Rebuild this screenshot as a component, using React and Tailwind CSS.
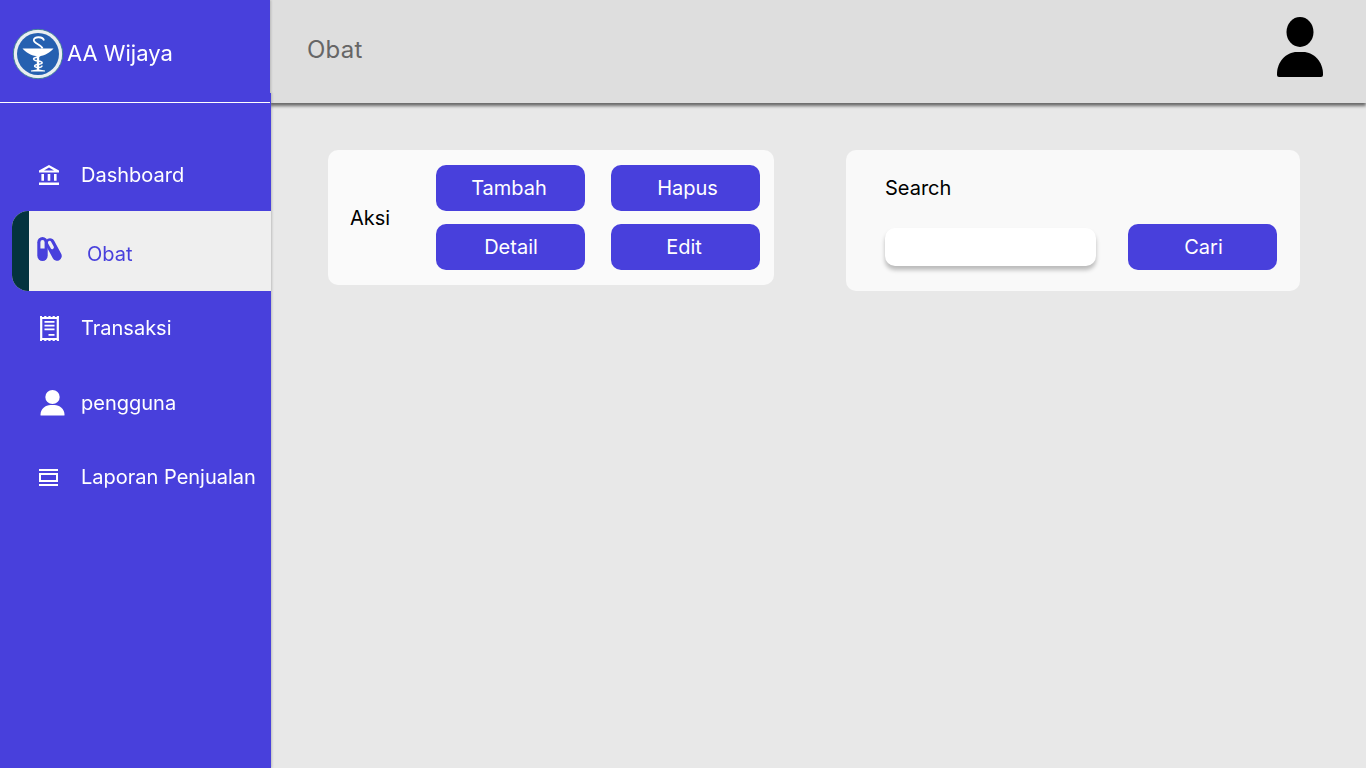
import React from "react";

function Logo() {
  return (
    <svg width="52" height="52" viewBox="0 0 52 52" className="shrink-0">
      <circle cx="26" cy="26" r="24.7" fill="#e9eef1" stroke="#3f7f96" strokeWidth="1" />
      <circle cx="26" cy="26" r="21" fill="#2560b0" />
      <path d="M10.5 20.5 H41.5 C38 24.5 33 27.5 28 28 H24 C19 27.5 14 24.5 10.5 20.5 Z" fill="#fff" />
      <path d="M24.8 28 H27.2 V41.5 L33 42.4 V43.5 H19 V42.4 L24.8 41.5 Z" fill="#fff" />
      <path d="M32 12.5 C31 8.5 22 8 21.8 12 C21.6 15.8 29.5 16.5 30.5 20.5" fill="none" stroke="#fff" strokeWidth="1.8" />
      <path d="M29.5 24 C30 27 28 28.5 22.5 30 C20.5 31 22 32.5 26 33 C31.5 33.6 31.5 36 26 36.4 C21.5 36.8 21.5 39.5 26 39.5 C29 39.5 30 38.5 30 37.5" fill="none" stroke="#fff" strokeWidth="1.5" />
    </svg>
  );
}

function BankIcon() {
  return (
    <svg width="20" height="20" viewBox="0 0 20 20" className="shrink-0">
      <path d="M10 0 20 5.6V7.6H0V5.6Z M10 2.6 5 5.6H15Z" fill="#fff" fillRule="evenodd" />
      <path d="M2.4 9h2.6v6.8H2.4Z M8.7 9h2.6v6.8H8.7Z M15 9h2.6v6.8H15Z M0 17.6H20V20H0Z" fill="#fff" />
    </svg>
  );
}

function PillIcon() {
  return (
    <svg width="26" height="25" viewBox="0 0 26 25" className="shrink-0">
      <line x1="13" y1="6" x2="20" y2="19" stroke="#4840dc" strokeWidth="9.5" strokeLinecap="round" />
      <line x1="12.6" y1="5.6" x2="15.2" y2="10.4" stroke="#efefef" strokeWidth="3.4" strokeLinecap="round" />
      <rect x="0.3" y="0" width="10.4" height="24" rx="5.2" fill="#4840dc" />
      <path d="M3.4 11.5V5.2a2.1 2.1 0 0 1 4.2 0v6.3Z" fill="#efefef" />
    </svg>
  );
}

function ReceiptIcon() {
  return (
    <svg width="19" height="25" viewBox="0 0 19 25" className="shrink-0">
      <path d="M1.2 2 H17.8 V23 H1.2 Z" fill="none" stroke="#fff" strokeWidth="2.2" />
      <path d="M0 0h2v1.8H0Zm4.2 0h2.2v1.8H4.2Zm4.2 0h2.2v1.8H8.4Zm4.2 0h2.2v1.8h-2.2Zm4.2 0H19v1.8h-2.2ZM0 23.2h2V25H0Zm4.2 0h2.2V25H4.2Zm4.2 0h2.2V25H8.4Zm4.2 0h2.2V25h-2.2Zm4.2 0H19V25h-2.2Z" fill="#fff" />
      <path d="M4.5 5h10v1.8h-10Z M4.5 8.7h10v1.8h-10Z M4.5 12.4h10v1.8h-10Z M8.5 18h6v1.8h-6Z" fill="#fff" />
    </svg>
  );
}

function SmallPerson() {
  return (
    <svg width="25" height="26" viewBox="0 0 25 26" className="shrink-0">
      <ellipse cx="12.5" cy="7" rx="7.2" ry="7" fill="#fff" />
      <path d="M.5 24.5C.5 19 5.5 15 10.5 15H14.5C19.5 15 24.5 19 24.5 24.5V25a.5.5 0 0 1-.5.5H1a.5.5 0 0 1-.5-.5Z" fill="#fff" />
    </svg>
  );
}

function BigPerson() {
  return (
    <svg width="46" height="60" viewBox="0 0 46 60" className="shrink-0">
      <ellipse cx="23" cy="15" rx="13.5" ry="15" fill="#000" />
      <path d="M0 57C0 45 9 35 20 35H26C37 35 46 45 46 57V58a2 2 0 0 1-2 2H2a2 2 0 0 1-2-2Z" fill="#000" />
    </svg>
  );
}

function ReportIcon() {
  return (
    <svg width="19" height="17" viewBox="0 0 19 17" className="shrink-0">
      <path d="M0 0H19V2H0Z M0 15H19V17H0Z" fill="#fff" />
      <rect x="1" y="5" width="17" height="7" fill="none" stroke="#fff" strokeWidth="2" />
    </svg>
  );
}

function NavItem({ icon, label, h }) {
  return (
    <div className={`flex items-center pl-[39px] ${h}`}>
      <span className="flex w-[42.5px] shrink-0">{icon}</span>
      <span className="-ml-[0.5px] text-[20px] text-white">{label}</span>
    </div>
  );
}

function Btn({ children, cls = "" }) {
  return (
    <button className={`flex h-[46px] w-[149px] items-center justify-center rounded-[10px] bg-[#4840dc] text-[20px] text-white ${cls}`}>
      {children}
    </button>
  );
}

export default function App() {
  return (
    <div className="flex h-screen w-full overflow-hidden bg-[#e8e8e8] font-['Inter',sans-serif]">
      <aside className="relative z-10 flex w-[271px] shrink-0 flex-col drop-shadow-[1px_0_1px_rgba(0,0,0,0.18)]">
        <div className="flex h-[93px] w-[270px] items-start bg-[#4840dc] pl-[11.5px] pt-[27.5px]">
          <Logo />
          <span className="ml-[3.5px] mt-[9px] text-[22px] leading-[33px] text-white">AA Wijaya</span>
        </div>
        <div className="flex-1 bg-[#4840dc]">
          <div className="mt-[9px] h-px w-[270px] bg-white" />
          <nav className="pt-[35px]">
            <NavItem h="h-[73px]" icon={<BankIcon />} label="Dashboard" />
            <div className="ml-3 flex h-[80px] overflow-hidden rounded-l-2xl bg-[#efefef]">
              <div className="h-full w-[17px] shrink-0 bg-[#04333f]" />
              <div className="flex h-full items-center">
                <span className="mb-[4px] ml-2 flex">
                  <PillIcon />
                </span>
                <span className="ml-[24px] mt-[6px] text-[20px] text-[#4840dc]">Obat</span>
              </div>
            </div>
            <NavItem h="h-[74px]" icon={<span className="ml-px"><ReceiptIcon /></span>} label="Transaksi" />
            <NavItem h="h-[75px]" icon={<span className="ml-px"><SmallPerson /></span>} label="pengguna" />
            <NavItem h="h-[74px]" icon={<ReportIcon />} label="Laporan Penjualan" />
          </nav>
        </div>
      </aside>

      <main className="-ml-px flex min-w-0 flex-1 flex-col">
        <header className="flex h-[103px] shrink-0 items-start justify-between bg-[#dedede] pl-[37px] pr-[43px] shadow-[0_3px_3px_rgba(0,0,0,0.55)]">
          <h1 className="mt-[32px] text-[24px] leading-9 tracking-[0.01em] text-[#666666]">Obat</h1>
          <span className="mt-[17px] flex">
            <BigPerson />
          </span>
        </header>

        <section className="flex items-start gap-[72px] pl-[58px] pt-[47px]">
          <div className="flex h-[135px] w-[446px] items-center rounded-[10px] bg-[#fafafa] pl-[22px]">
            <span className="w-[86px] text-[20px] text-black">Aksi</span>
            <div className="grid grid-cols-[149px_149px] gap-x-[26px] gap-y-[13px]">
              <Btn cls="pr-[3px]">Tambah</Btn>
              <Btn cls="pl-[4px]">Hapus</Btn>
              <Btn cls="pl-[1px]">Detail</Btn>
              <Btn cls="pr-[3px]">Edit</Btn>
            </div>
          </div>

          <div className="h-[141px] w-[454px] rounded-[10px] bg-[#f9f9f9] pl-[39px] pt-6">
            <div className="text-[20px] leading-7 text-black">Search</div>
            <div className="mt-[22px] flex items-center gap-8">
              <input
                type="text"
                className="h-[38px] w-[211px] rounded-[10px] bg-white shadow-[0_4px_4px_rgba(0,0,0,0.25)] outline-none"
              />
              <Btn cls="pl-[2px]">Cari</Btn>
            </div>
          </div>
        </section>
      </main>
    </div>
  );
}
